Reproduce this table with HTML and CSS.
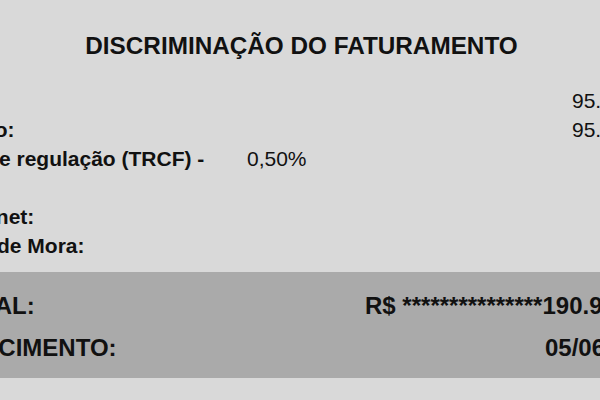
FILE: index.html
```html
<!DOCTYPE html>
<html lang="pt-BR">
<head>
<meta charset="utf-8">
<title>Discriminação do faturamento</title>
<link rel="stylesheet" href="styles.css">
</head>
<body>
<div class="page">
  <h1 class="title">DISCRIMINAÇÃO DO FATURAMENTO</h1>
  <div class="items">
    <div class="row"><span class="label">Plano</span><span class="rate"></span><span class="value">95.45</span></div>
    <div class="row"><span class="label">Crédito:</span><span class="rate"></span><span class="value">95.45</span></div>
    <div class="row"><span class="label">Taxa de regulação (TRCF) -</span><span class="rate">0,50%</span><span class="value"></span></div>
    <div class="row"><span class="label"></span><span class="rate"></span><span class="value"></span></div>
    <div class="row"><span class="label">Mundinet:</span><span class="rate"></span><span class="value"></span></div>
    <div class="row"><span class="label">Juros de Mora:</span><span class="rate"></span><span class="value"></span></div>
  </div>
  <div class="summary">
    <div class="sum-row"><span class="sum-label">TOTAL:</span><span class="amount">R$ <span class="stars">***************</span>190.90</span></div>
    <div class="sum-row"><span class="sum-label">VENCIMENTO:</span><span class="date">05/06/2024</span></div>
  </div>
</div>
</body>
</html>
```

FILE: styles.css
```css
html, body {
  margin: 0;
  padding: 0;
}
body {
  background: #d9d9d9;
  overflow: hidden;
  font-family: "Liberation Sans", Arial, sans-serif;
  color: #111;
}
.page {
  width: 735px;
  margin-left: -66px;
  padding-top: 32px;
}
.title {
  margin: 0;
  font-size: 24.3px;
  line-height: 28px;
  font-weight: 700;
  text-align: center;
}
.items {
  margin-top: 26px;
  font-size: 21px;
  line-height: 29px;
}
.row {
  display: grid;
  grid-template-columns: 313px 325px 1fr;
  height: 29px;
  white-space: nowrap;
}
.label {
  font-weight: 700;
}
.summary {
  margin-top: 12px;
  height: 106px;
  box-sizing: border-box;
  padding: 13px 0 0 15px;
  background: #aaaaaa;
  font-size: 24px;
  line-height: 42px;
  font-weight: 700;
}
.sum-row {
  display: grid;
  grid-template-columns: 416px 180px 1fr;
  white-space: nowrap;
}
.amount {
  grid-column: 2 / -1;
}
.date {
  grid-column: 3;
}
```
